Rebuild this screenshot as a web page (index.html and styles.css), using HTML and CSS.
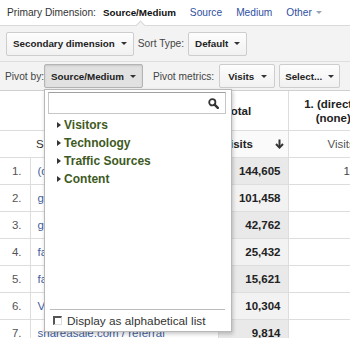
FILE: index.html
```html
<!DOCTYPE html>
<html>
<head>
<meta charset="utf-8">
<link rel="stylesheet" href="styles.css">
</head>
<body>
<div class="page">
  <div class="dimbar">
    <span class="label">Primary Dimension:</span>
    <span class="current">Source/Medium</span>
    <a class="dimlink">Source</a>
    <a class="dimlink">Medium</a>
    <a class="dimlink">Other <span class="caret caret-light"></span></a>
  </div>
  <div class="toolbar">
    <div class="row row-secondary">
      <button class="btn">Secondary dimension<span class="caret"></span></button>
      <span class="label">Sort Type:</span>
      <button class="btn">Default<span class="caret"></span></button>
    </div>
    <div class="row row-pivot">
      <span class="label">Pivot by:</span>
      <div class="menu-anchor">
        <button class="btn btn-pressed">Source/Medium<span class="caret"></span></button>
        <div class="dropdown">
          <div class="search">
            <svg class="search-icon" width="11" height="11" viewBox="0 0 11 11"><circle cx="4.3" cy="4.3" r="3.1" fill="none" stroke="#333" stroke-width="1.8"/><line x1="6.6" y1="6.6" x2="9.8" y2="9.8" stroke="#333" stroke-width="2.4" stroke-linecap="round"/></svg>
          </div>
          <ul class="tree">
            <li class="tree-item"><span class="tri"></span>Visitors</li>
            <li class="tree-item"><span class="tri"></span>Technology</li>
            <li class="tree-item"><span class="tri"></span>Traffic Sources</li>
            <li class="tree-item"><span class="tri"></span>Content</li>
          </ul>
          <div class="menu-footer">
            <span class="checkbox"></span>
            <span>Display as alphabetical list</span>
          </div>
        </div>
      </div>
      <span class="label label-metrics">Pivot metrics:</span>
      <button class="btn btn-visits">Visits<span class="caret"></span></button>
      <button class="btn btn-select">Select...<span class="caret"></span></button>
    </div>
  </div>
  <table class="grid">
    <colgroup><col class="c-num"><col class="c-src"><col class="c-total"><col class="c-pivot"></colgroup>
    <thead>
      <tr class="head1">
        <th colspan="2"></th>
        <th class="h-total">Total</th>
        <th class="h-pivot">1. (direct) /<br>(none)</th>
      </tr>
      <tr class="head2">
        <th colspan="2" class="h-src">Source/Medium</th>
        <th class="h-visits"><div class="sorted">Visits<svg width="9" height="10" viewBox="0 0 9 10"><line x1="4.5" y1="0.5" x2="4.5" y2="8" stroke="#333" stroke-width="2"/><polyline points="1,5 4.5,8.6 8,5" fill="none" stroke="#333" stroke-width="2"/></svg></div></th>
        <th class="h-pvisits">Visits</th>
      </tr>
    </thead>
    <tbody>
      <tr><td class="num">1.</td><td class="src"><a>(direct) / (none)</a></td><td class="val">144,605</td><td class="pv">144,605</td></tr>
      <tr><td class="num">2.</td><td class="src"><a>google / organic</a></td><td class="val">101,458</td><td class="pv"></td></tr>
      <tr><td class="num">3.</td><td class="src"><a>google / cpc</a></td><td class="val">42,762</td><td class="pv"></td></tr>
      <tr><td class="num">4.</td><td class="src"><a>facebook.com / referral</a></td><td class="val">25,432</td><td class="pv"></td></tr>
      <tr><td class="num">5.</td><td class="src"><a>facebook / cpc</a></td><td class="val">15,621</td><td class="pv"></td></tr>
      <tr><td class="num">6.</td><td class="src"><a>VigLink / affiliate</a></td><td class="val">10,304</td><td class="pv"></td></tr>
      <tr><td class="num">7.</td><td class="src"><a>shareasale.com / referral</a></td><td class="val">9,814</td><td class="pv"></td></tr>
    </tbody>
  </table>
</div>
</body>
</html>
```
FILE: styles.css
```css
html, body {
  margin: 0;
  padding: 0;
  background: #fff;
  overflow: hidden;
}
.page {
  width: 350px;
  height: 338px;
  overflow: hidden;
  color: #333;
}
.dimbar, .toolbar {
  font-family: "Liberation Sans", Arial, sans-serif;
  font-size: 10.2px;
  white-space: nowrap;
}
.dimbar {
  height: 25px;
  display: flex;
  align-items: center;
  padding-left: 7px;
  box-sizing: border-box;
  padding-bottom: 1px;
}
.dimbar .label { margin-right: 7px; color: #333; }
.current { font-weight: bold; font-size: 9.8px; color: #111; margin-right: 14px; }
.dimlink { color: #2f50a2; margin-right: 14px; display: inline-flex; align-items: center; gap: 4px; }
.caret {
  display: inline-block;
  flex: none;
  width: 0;
  height: 0;
  border-left: 3px solid transparent;
  border-right: 3px solid transparent;
  border-top: 3px solid #333;
}
.caret-light { border-top-color: #9aa3b5; }

.toolbar { background: #f3f3f3; }
.row {
  display: flex;
  align-items: center;
}
.row > * { flex: none; }
.row-secondary {
  position: relative;
  height: 35px;
  border-top: 1px solid #d9d9d9;
  padding-left: 6px;
  gap: 4px;
}
.row-secondary::before {
  content: "";
  position: absolute;
  left: 137px;
  top: -4px;
  width: 6px;
  height: 6px;
  background: #f3f3f3;
  border-top: 1px solid #d9d9d9;
  border-left: 1px solid #d9d9d9;
  transform: rotate(45deg);
}
.row-secondary .label { color: #444; }
.row-pivot {
  height: 28px;
  border-top: 1px solid #dedede;
  border-bottom: 1px solid #cfcfcf;
  padding-left: 5px;
}
.row-pivot .label { color: #444; }
.row-pivot .label-metrics { margin-left: 10px; margin-right: 5px; }
.row-pivot .btn + .btn { margin-left: 4px; }
.btn {
  font: inherit;
  font-size: 9.8px;
  font-weight: bold;
  color: #222;
  height: 24px;
  display: inline-flex;
  align-items: center;
  gap: 6px;
  padding: 0 6px 0 6px;
  border: 1px solid #cdcdcd;
  border-radius: 2px;
  background: linear-gradient(#fdfdfd, #f1f1f1);
  margin: 0;
}
.btn-visits { padding: 0 7px 0 8px; gap: 7px; }
.btn-select { padding: 0 5px 0 5px; gap: 6px; }
.btn-pressed {
  background: #e1e1e1;
  border-color: #b4b4b4;
  box-shadow: inset 0 1px 2px rgba(0,0,0,0.12);
}
.menu-anchor { position: relative; display: flex; }

.dropdown {
  position: absolute;
  top: calc(100% + 1px);
  left: 0;
  width: 188px;
  height: 243px;
  box-sizing: border-box;
  border: 1px solid #b8b8b8;
  background: #fff;
  box-shadow: 1px 2px 4px rgba(0,0,0,0.22);
  display: flex;
  flex-direction: column;
  padding: 2px 5px 0 3px;
  z-index: 10;
  font-family: "Liberation Sans", Arial, sans-serif;
}
.search {
  height: 22px;
  box-sizing: border-box;
  border: 1px solid #c6c6c6;
  border-top-color: #a0a0a0;
  display: flex;
  align-items: center;
  justify-content: flex-end;
  padding-right: 6px;
}
.tree {
  flex: 1;
  list-style: none;
  margin: 0;
  padding: 2px 0 0 0;
}
.tree-item {
  height: 18px;
  display: flex;
  align-items: center;
  gap: 3px;
  padding-left: 9px;
  font-size: 12px;
  font-weight: bold;
  color: #3e5a22;
}
.tri {
  width: 0;
  height: 0;
  border-top: 3px solid transparent;
  border-bottom: 3px solid transparent;
  border-left: 4px solid #333;
}
.menu-footer {
  height: 22px;
  box-sizing: border-box;
  border-top: 1px solid #bcbcbc;
  margin: 0 1px 0 2px;
  display: flex;
  align-items: center;
  gap: 5px;
  padding-left: 3px;
  font-size: 11.8px;
  color: #333;
  white-space: nowrap;
}
.checkbox {
  flex: none;
  width: 9px;
  height: 9px;
  box-sizing: border-box;
  border: 1px solid #ddd;
  border-top: 2px solid #555;
  border-left: 2px solid #555;
  background: #fff;
}

.grid {
  border-collapse: collapse;
  table-layout: fixed;
  width: 378px;
  font-family: "Liberation Sans", Arial, sans-serif;
  font-size: 11.5px;
}
.c-num { width: 30px; }
.c-src { width: 188px; }
.c-total { width: 70px; }
.c-pivot { width: 90px; }
.grid th, .grid td {
  border-bottom: 1px solid #dddddd;
  padding: 0;
  white-space: nowrap;
  overflow: hidden;
}
.head1 th { height: 39px; }
.head2 th { height: 26px; }
.grid tbody td { height: 26px; }
.h-total {
  text-align: left;
  padding-left: 6px !important;
  font-weight: bold;
  color: #222;
  border-left: 1px solid #ddd;
}
.h-pivot {
  text-align: center;
  font-weight: bold;
  color: #222;
  line-height: 14px;
  border-left: 1px solid #ddd;
}
.h-src {
  text-align: left;
  font-weight: normal;
  padding-left: 36px !important;
  color: #333;
}
.h-visits {
  font-weight: bold;
  color: #222;
  background: #fafafa;
  border-left: 1px solid #ddd;
}
.sorted {
  display: flex;
  align-items: center;
  justify-content: space-between;
  padding: 0 4px 0 4px;
}
.h-pvisits {
  text-align: left;
  font-weight: normal;
  color: #555;
  padding-left: 39px !important;
  border-left: 1px solid #ddd;
}
.num {
  text-align: right;
  padding-right: 8px !important;
  color: #555;
  border-right: 1px solid #ddd;
}
.src { padding-left: 7px !important; }
.src a { color: #3f5f9f; }
.val {
  text-align: right;
  padding-right: 7px !important;
  font-weight: bold;
  color: #222;
  background: #f2f2f2;
  border-left: 1px solid #ddd;
}
.grid tbody tr:nth-child(odd) .val { background: #e9e9e9; }
.pv {
  border-left: 1px solid #ddd;
  padding-left: 55px !important;
  color: #444;
}
```
